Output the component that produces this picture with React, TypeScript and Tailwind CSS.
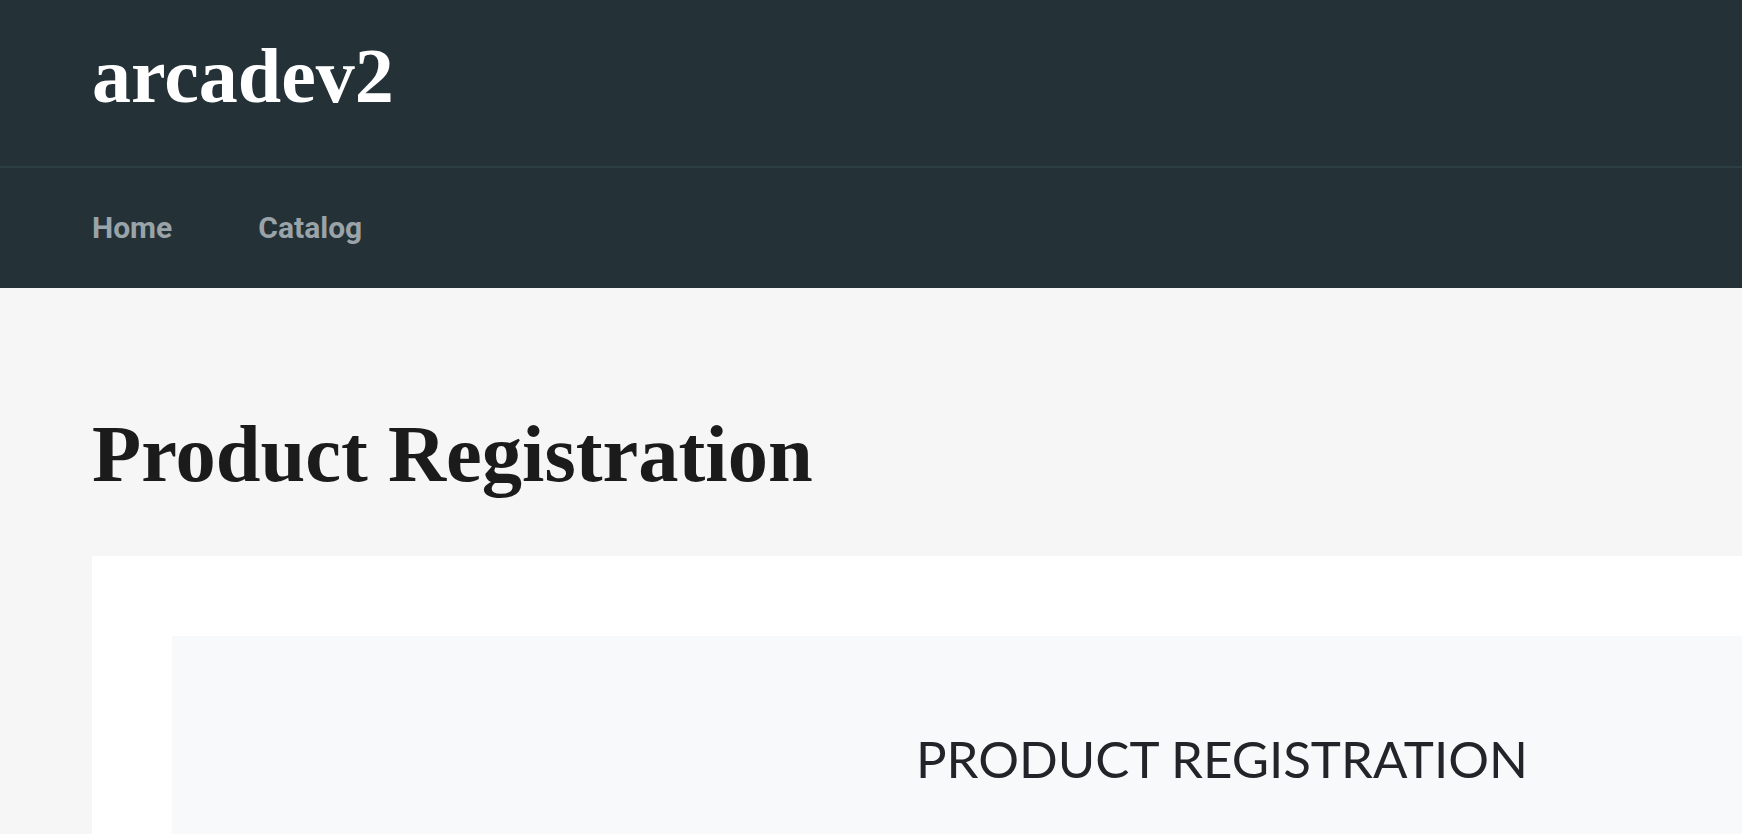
import React from "react";

export default function App() {
  return (
    <div className="min-h-screen w-full bg-[#f6f6f6] overflow-hidden">
      <header className="bg-[#243238]">
        <div className="h-[168px] px-[92px] flex items-center border-b-2 border-[#2d3e45]">
          <div
            className="text-white font-bold text-[78px] leading-none pb-[14px]"
            style={{ fontFamily: '"Liberation Serif", serif' }}
          >
            arcadev2
          </div>
        </div>
        <nav className="h-[120px] px-[92px] flex items-center gap-[86px]">
          <a
            className="text-[#9aa3a8] text-[30px] font-bold leading-none"
            style={{ fontFamily: 'Roboto, sans-serif' }}
          >
            Home
          </a>
          <a
            className="text-[#9aa3a8] text-[30px] font-bold leading-none"
            style={{ fontFamily: 'Roboto, sans-serif' }}
          >
            Catalog
          </a>
        </nav>
      </header>
      <main className="pl-[92px]">
        <h1
          className="pt-[126px] text-[80.5px] font-bold leading-none text-[#1b1b1b]"
          style={{ fontFamily: '"Liberation Serif", serif' }}
        >
          Product Registration
        </h1>
        <div className="mt-[61px] bg-white w-[2200px] pt-[80px] pl-[80px]">
          <div className="bg-[#f8f9fa] w-[2100px] h-[400px] pt-[97px] flex justify-center">
            <h2
              className="text-[51px] font-normal leading-none text-[#212529]"
              style={{ fontFamily: 'Lato, sans-serif' }}
            >
              PRODUCT REGISTRATION
            </h2>
          </div>
        </div>
      </main>
    </div>
  );
}
